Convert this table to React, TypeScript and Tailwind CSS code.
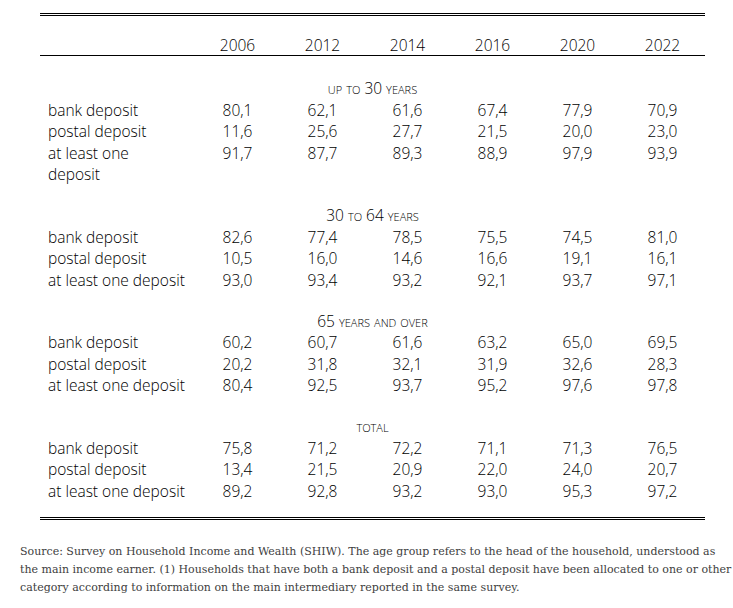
import React from "react";

const years = ["2006", "2012", "2014", "2016", "2020", "2022"];

type Row = { label: React.ReactNode; values: string[] };
type Section = { title: string; rows: Row[] };

const sections: Section[] = [
  {
    title: "up to 30 years",
    rows: [
      { label: "bank deposit", values: ["80,1", "62,1", "61,6", "67,4", "77,9", "70,9"] },
      { label: "postal deposit", values: ["11,6", "25,6", "27,7", "21,5", "20,0", "23,0"] },
      {
        label: (
          <>
            at least one
            <br />
            deposit
          </>
        ),
        values: ["91,7", "87,7", "89,3", "88,9", "97,9", "93,9"],
      },
    ],
  },
  {
    title: "30 to 64 years",
    rows: [
      { label: "bank deposit", values: ["82,6", "77,4", "78,5", "75,5", "74,5", "81,0"] },
      { label: "postal deposit", values: ["10,5", "16,0", "14,6", "16,6", "19,1", "16,1"] },
      { label: "at least one deposit", values: ["93,0", "93,4", "93,2", "92,1", "93,7", "97,1"] },
    ],
  },
  {
    title: "65 years and over",
    rows: [
      { label: "bank deposit", values: ["60,2", "60,7", "61,6", "63,2", "65,0", "69,5"] },
      { label: "postal deposit", values: ["20,2", "31,8", "32,1", "31,9", "32,6", "28,3"] },
      { label: "at least one deposit", values: ["80,4", "92,5", "93,7", "95,2", "97,6", "97,8"] },
    ],
  },
  {
    title: "total",
    rows: [
      { label: "bank deposit", values: ["75,8", "71,2", "72,2", "71,1", "71,3", "76,5"] },
      { label: "postal deposit", values: ["13,4", "21,5", "20,9", "22,0", "24,0", "20,7"] },
      { label: "at least one deposit", values: ["89,2", "92,8", "93,2", "93,0", "95,3", "97,2"] },
    ],
  },
];

export default function App() {
  return (
    <div className="w-[733px] h-[608px] bg-white overflow-hidden">
      <div
        className="ml-[40px] pt-[13px] w-[665px] text-[15.5px] leading-[21.5px] font-light text-black"
        style={{ fontFamily: '"Open Sans", "Noto Sans", sans-serif' }}
      >
        <div className="h-px bg-black" />
        <div className="h-px bg-black mt-px" />
        <div className="grid grid-cols-[155px_repeat(6,85px)] h-[40px] items-end border-b border-black">
          <div />
          {years.map((y) => (
            <div key={y} className="text-center translate-y-px">
              {y}
            </div>
          ))}
        </div>
        <div className="h-[22px]" />
        {sections.map((s, si) => (
          <div key={s.title} className={si > 0 ? "mt-[19.5px]" : ""}>
            <div className="text-center h-[21.5px] [font-variant:small-caps]">{s.title}</div>
            {s.rows.map((r, ri) => (
              <div key={ri} className="grid grid-cols-[155px_repeat(6,85px)] items-start">
                <div className="pl-[8px]">{r.label}</div>
                {r.values.map((v, vi) => (
                  <div key={vi} className="text-center">
                    {v}
                  </div>
                ))}
              </div>
            ))}
          </div>
        ))}
        <div className="h-[15px]" />
        <div className="h-px bg-black" />
        <div className="h-px bg-black mt-px" />
      </div>
      <div
        className="pl-[20px] pt-[23px] text-[11px] leading-[18px] text-[#404040]"
        style={{ fontFamily: '"DejaVu Serif", "Liberation Serif", serif' }}
      >
        Source: Survey on Household Income and Wealth (SHIW). The age group refers to the head of the household, understood as
        <br />
        the main income earner. (1) Households that have both a bank deposit and a postal deposit have been allocated to one or other
        <br />
        category according to information on the main intermediary reported in the same survey.
      </div>
    </div>
  );
}
